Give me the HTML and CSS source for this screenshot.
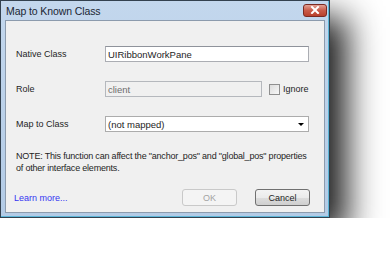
FILE: index.html
```html
<!DOCTYPE html>
<html lang="en">
<head>
<meta charset="UTF-8">
<meta name="viewport" content="width=device-width, initial-scale=1.0">
<title>Map to Known Class</title>
<link rel="stylesheet" href="styles.css">
</head>
<body>
<div class="dialog">
  <div class="titlebar">
    <div class="title">Map to Known Class</div>
    <div class="close">
      <svg width="10" height="8" viewBox="0 0 10 8">
        <path d="M2 1 L8 7 M8 1 L2 7" stroke="#fff" stroke-width="2" stroke-linecap="square"/>
      </svg>
    </div>
  </div>
  <div class="client">
    <div class="row">
      <div class="label">Native Class</div>
      <div class="field input">UIRibbonWorkPane</div>
    </div>
    <div class="row">
      <div class="label">Role</div>
      <div class="field input disabled short">client</div>
      <div class="check"></div>
      <div class="check-label">Ignore</div>
    </div>
    <div class="row">
      <div class="label">Map to Class</div>
      <div class="field select">
        <span>(not mapped)</span>
        <span class="arrow"></span>
      </div>
    </div>
    <div class="note">NOTE: This function can affect the "anchor_pos" and "global_pos" properties<br>of other interface elements.</div>
    <div class="footer">
      <a class="link" href="#">Learn more...</a>
      <div class="buttons">
        <div class="button off">OK</div>
        <div class="button">Cancel</div>
      </div>
    </div>
  </div>
</div>
</body>
</html>
```

FILE: styles.css
```css
body {
  margin: 0;
  background-color: #fff;
  font-family: "Liberation Sans", Arial, sans-serif;
  font-size: 9px;
  color: #1e1e1e;
}

.dialog {
  width: 328px;
  height: 216px;
  border: 1px solid #33414f;
  background: linear-gradient(#c3d7ed, #b3cbe6);
  box-shadow: inset 0 -1px 0 #5cb6d8, inset -1px 0 0 #5cb6d8, 17px 17px 32px rgba(0, 0, 0, 0.88);
  display: flex;
  flex-direction: column;
}

.titlebar {
  height: 19px;
  display: flex;
  align-items: center;
  justify-content: space-between;
  padding: 0 2px 0 5px;
}

.title {
  font-size: 10.5px;
  color: #1b2633;
  letter-spacing: -0.1px;
}

.close {
  width: 22px;
  height: 11px;
  margin-top: -1px;
  border: 1px solid #7a2a22;
  border-radius: 3px;
  background: linear-gradient(#e2a195, #c95a48 50%, #b8402c);
  display: flex;
  align-items: center;
  justify-content: center;
}

.client {
  flex: 1;
  margin: 0 4px 4px 4px;
  border: 1px solid #8c9bad;
  background-color: #f0f0f0;
  padding: 25px 14px 0 10px;
}

.row {
  display: flex;
  align-items: center;
  height: 16px;
  margin-bottom: 19px;
}

.label {
  width: 89px;
}

.field {
  box-sizing: border-box;
  height: 16px;
  width: 204px;
  border: 1px solid #abadb3;
  border-top-color: #8f939b;
  background-color: #fff;
  padding: 0 2px;
  display: flex;
  align-items: center;
  font-size: 9.5px;
}

.disabled {
  background-color: #f0f0f0;
  border-color: #b5b8bd;
  color: #6d6d6d;
}

.short {
  width: 157px;
}

.check {
  width: 9px;
  height: 9px;
  margin-left: 7px;
  border: 1px solid #8f8f8f;
  background: linear-gradient(135deg, #dcdcdc, #f8f8f8);
}

.check-label {
  margin-left: 3px;
}

.select {
  justify-content: space-between;
  border-color: #acacac;
}

.arrow {
  width: 0;
  height: 0;
  margin-right: 2px;
  border-left: 3px solid transparent;
  border-right: 3px solid transparent;
  border-top: 3px solid #000;
}

.note {
  line-height: 12px;
  margin-top: -1px;
  letter-spacing: -0.2px;
  white-space: nowrap;
}

.footer {
  display: flex;
  align-items: center;
  justify-content: space-between;
  margin-top: 15px;
}

.link {
  color: #3636f2;
  text-decoration: none;
  margin-left: -2px;
}

.buttons {
  display: flex;
  gap: 18px;
}

.button {
  box-sizing: border-box;
  width: 55px;
  height: 17px;
  border: 1px solid #707070;
  border-radius: 3px;
  background: linear-gradient(#f3f3f3, #ebebeb 50%, #dddddd 51%, #cfcfcf);
  display: flex;
  align-items: center;
  justify-content: center;
}

.off {
  border-color: #c9c9c9;
  background: #f4f4f4;
  color: #a3a3a3;
}
```
